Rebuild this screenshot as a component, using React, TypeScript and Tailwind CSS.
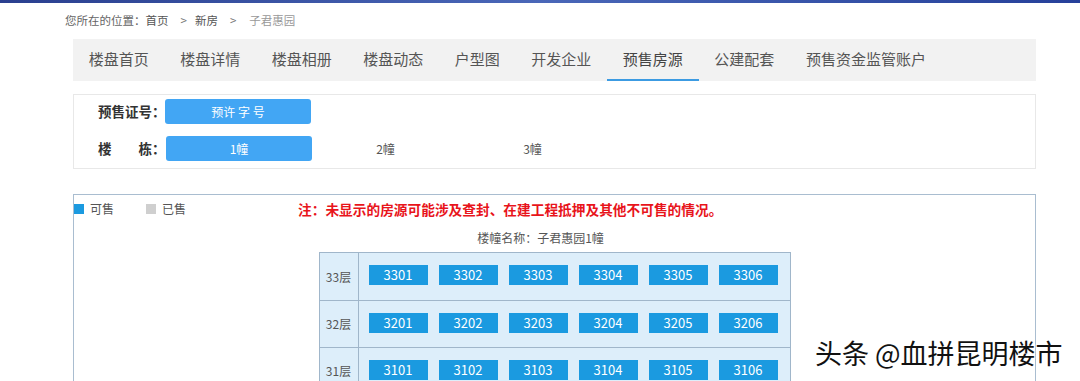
const tabs = [
  "楼盘首页",
  "楼盘详情",
  "楼盘相册",
  "楼盘动态",
  "户型图",
  "开发企业",
  "预售房源",
  "公建配套",
  "预售资金监管账户",
];

const floors = [33, 32, 31, 30];
const units = [1, 2, 3, 4, 5, 6];

const font = { fontFamily: '"Noto Sans CJK SC", "Noto Sans", sans-serif' };

export default function App() {
  return (
    <div
      className="relative h-[381px] w-[1080px] overflow-hidden bg-white text-[#333]"
      style={font}
    >
      {/* banner edge */}
      <div className="h-[3px] bg-gradient-to-r from-[#2a3f8f] via-[#4a67b8] to-[#26409a]" />

      {/* breadcrumb */}
      <div className="flex h-[36px] items-center pl-[65px] text-[11.5px] leading-none text-[#666]">
        <span>您所在的位置：</span>
        <span className="text-[#555]">首页</span>
        <span className="ml-[12px] mr-[8px] text-[#777]">&gt;</span>
        <span className="text-[#555]">新房</span>
        <span className="ml-[12px] mr-[13px] text-[#777]">&gt;</span>
        <span className="text-[#999]">子君惠园</span>
      </div>

      <div className="ml-[73px] w-[963px]">
        {/* tabs */}
        <nav className="flex h-[42px] bg-[#f2f2f2]">
          {tabs.map((t) => (
            <div
              key={t}
              className={`flex items-center border-b-2 px-[15.75px] text-[15px] ${
                t === "预售房源"
                  ? "border-[#3c9be2] text-[#444]"
                  : "border-transparent text-[#555]"
              }`}
            >
              {t}
            </div>
          ))}
        </nav>

        {/* filters */}
        <div className="mt-[13px] flex h-[75px] flex-col gap-[12px] border border-[#e8e8e8] pl-[24px] pt-[4px]">
          <div className="flex items-center">
            <span className="w-[67px] shrink-0 whitespace-nowrap text-[13.5px] font-semibold text-[#333]">
              预售证号：
            </span>
            <div className="flex h-[25px] w-[146px] items-center justify-center rounded-[3px] bg-[#42a6f4] text-[12px] text-white">
              预许 字 号
            </div>
          </div>
          <div className="flex items-center">
            <span className="w-[68px] shrink-0 whitespace-pre text-[13.5px] font-semibold text-[#333]">
              楼　　栋：
            </span>
            <div className="flex h-[25px] w-[146px] items-center justify-center rounded-[3px] bg-[#42a6f4] text-[12px] text-white">
              1幢
            </div>
            <div className="flex h-[25px] w-[147px] items-center justify-center text-[12px] text-[#555]">
              2幢
            </div>
            <div className="flex h-[25px] w-[147px] items-center justify-center text-[12px] text-[#555]">
              3幢
            </div>
          </div>
        </div>

        {/* units */}
        <div className="mt-[25px] h-[300px] border border-[#a9bdd0]">
          <div className="flex h-[28px] items-center text-[12px] text-[#555]">
            <span className="h-[10px] w-[10px] bg-[#1b9ae0]" />
            <span className="ml-[6px]">可售</span>
            <span className="ml-[32px] h-[10px] w-[10px] bg-[#cfcfcf]" />
            <span className="ml-[6px]">已售</span>
            <span className="ml-[112px] text-[13.7px] font-bold text-[#e8141b]">
              注：未显示的房源可能涉及查封、在建工程抵押及其他不可售的情况。
            </span>
          </div>
          <div className="flex h-[29px] items-center justify-center pr-[28px] text-[12px] text-[#555]">
            楼幢名称：子君惠园1幢
          </div>
          <div className="mx-auto w-[472px] border border-[#a0b6ca] bg-[#ddeefa]">
            {floors.map((f, i) => (
              <div
                key={f}
                className={`flex h-[47px] ${i > 0 ? "border-t border-[#a0b6ca]" : ""}`}
              >
                <div className="flex w-[39px] items-center justify-center border-r border-[#a0b6ca] text-[12px] text-[#555]">
                  {f}层
                </div>
                <div className="flex items-center gap-[11px] pb-[3px] pl-[10px]">
                  {units.map((u) => (
                    <div
                      key={u}
                      className="flex h-[20px] w-[59px] items-center justify-center bg-[#1b9ae0] text-[13px] text-white"
                    >
                      {f}0{u}
                    </div>
                  ))}
                </div>
              </div>
            ))}
          </div>
        </div>
      </div>

      {/* watermark */}
      <div
        className="absolute left-[815px] top-[339px] whitespace-nowrap text-[27px] leading-none text-[#111]"
        style={{ textShadow: "1px 1px 0 #fff, -1px -1px 0 #fff, 1px -1px 0 #fff, -1px 1px 0 #fff" }}
      >
        头条 @血拼昆明楼市
      </div>
    </div>
  );
}
